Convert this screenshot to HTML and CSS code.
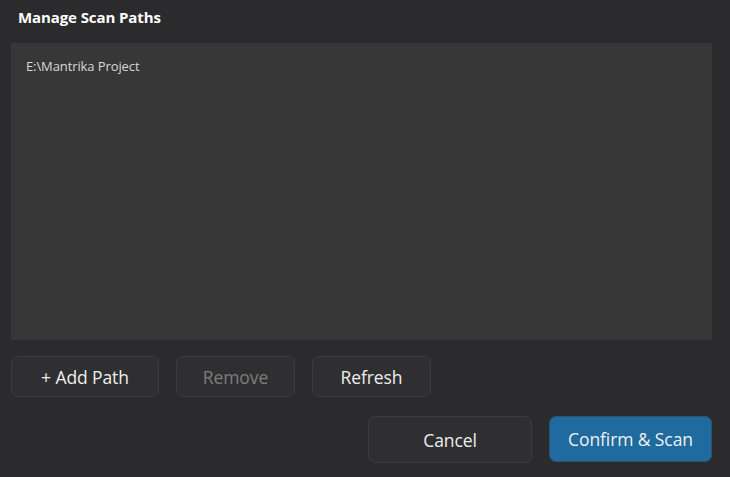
FILE: index.html
```html
<!DOCTYPE html>
<html>
<head>
<meta charset="utf-8">
<link rel="stylesheet" href="styles.css">
</head>
<body>
<div class="dialog">
  <h1 class="title">Manage Scan Paths</h1>
  <div class="list">
    <div class="item">E:\Mantrika Project</div>
  </div>
  <div class="row tools">
    <button class="btn add">+ Add Path</button>
    <button class="btn remove" disabled>Remove</button>
    <button class="btn refresh">Refresh</button>
  </div>
  <div class="row actions">
    <button class="btn cancel">Cancel</button>
    <button class="btn primary">Confirm &amp; Scan</button>
  </div>
</div>
</body>
</html>
```
FILE: styles.css
```css
html, body {
  margin: 0;
  padding: 0;
  background: #2b2b2d;
  width: 730px;
  height: 477px;
  overflow: hidden;
}
.dialog {
  font-family: "Open Sans", "Noto Sans", sans-serif;
  color: #e6e6e6;
  padding: 0 18px 0 11px;
  display: flex;
  flex-direction: column;
}
.title {
  margin: 0;
  padding: 7px 0 0 7px;
  height: 43px;
  box-sizing: border-box;
  font-size: 15px;
  line-height: 20px;
  font-weight: 700;
  color: #ffffff;
  letter-spacing: -0.1px;
}
.list {
  background: #373737;
  height: 297px;
  width: 701px;
  box-sizing: border-box;
  padding: 14px 15px;
}
.item {
  font-size: 13px;
  line-height: 18px;
  color: #d8d8d8;
  letter-spacing: -0.1px;
}
.row {
  display: flex;
}
.tools {
  margin-top: 16px;
  gap: 17px;
}
.actions {
  margin-top: 19px;
  justify-content: flex-end;
  gap: 17px;
  width: 701px;
}
.btn {
  font-family: "Open Sans", "Noto Sans", sans-serif;
  font-size: 17.5px;
  color: #eeeeee;
  background: #2f2f31;
  border: 1px solid #3d3d40;
  border-radius: 7px;
  height: 41px;
  padding: 0;
  letter-spacing: -0.1px;
}
.add { width: 148px; }
.remove { width: 119px; color: #7d7d7d; }
.refresh { width: 119px; }
.cancel { width: 164px; height: 47px; }
.primary {
  width: 163px;
  height: 46px;
  background: #1f6a9e;
  border-color: #2a5470;
  color: #f0f0f0;
}
```
